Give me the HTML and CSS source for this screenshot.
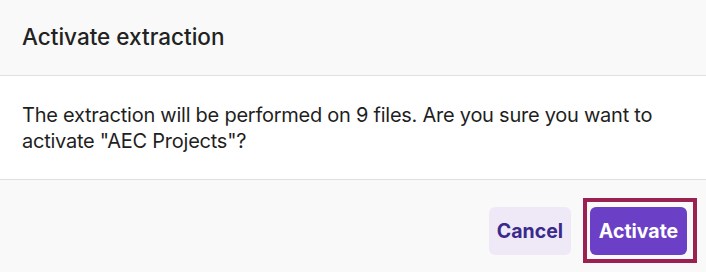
FILE: index.html
```html
<!DOCTYPE html>
<html>
<head>
<meta charset="utf-8">
<link rel="stylesheet" href="styles.css">
</head>
<body>
<div class="dialog">
  <div class="dialog-header">
    <h2 class="dialog-title">Activate extraction</h2>
  </div>
  <div class="dialog-body">
    <p class="dialog-text">The extraction will be performed on 9 files. Are you sure you want to activate "AEC Projects"?</p>
  </div>
  <div class="dialog-footer">
    <button class="btn btn-secondary">Cancel</button>
    <span class="focus-ring"><button class="btn btn-primary">Activate</button></span>
  </div>
</div>
</body>
</html>
```

FILE: styles.css
```css
html, body {
  margin: 0;
  padding: 0;
  background: #f9f9f9;
}
body {
  font-family: Inter, "Noto Sans", sans-serif;
  color: #1f1f1f;
  width: 706px;
  height: 272px;
  overflow: hidden;
}
.dialog {
  display: flex;
  flex-direction: column;
}
.dialog-header {
  height: 76px;
  box-sizing: border-box;
  background: #f9f9f9;
  border-bottom: 1px solid #e0e0e0;
  display: flex;
  align-items: center;
  padding: 0 22px 2px;
}
.dialog-title {
  margin: 0;
  font-size: 22.5px;
  font-weight: 500;
  color: #222;
}
.dialog-body {
  background: #fff;
  height: 104px;
  box-sizing: border-box;
  border-bottom: 1px solid #e0e0e0;
  padding: 26px 22px;
}
.dialog-text {
  margin: 0;
  font-size: 20px;
  line-height: 26px;
  letter-spacing: -0.25px;
  color: #1f1f1f;
}
.dialog-footer {
  display: flex;
  justify-content: flex-end;
  align-items: center;
  gap: 12px;
  padding: 18px 9px 0 0;
}
.btn {
  display: block;
  height: 48px;
  border: none;
  border-radius: 6px;
  font-family: Inter, "Noto Sans", sans-serif;
  font-size: 19.5px;
  font-weight: 700;
  padding: 0;
  cursor: pointer;
}
.btn-secondary {
  width: 82px;
  background: #efe9f7;
  color: #3a2a8c;
}
.btn-primary {
  width: 97px;
  background: #6b3fc6;
  color: #fff;
}
.focus-ring {
  display: block;
  border: 4px solid #9b2150;
  padding: 5px 6px 4px 3px;
}
```
